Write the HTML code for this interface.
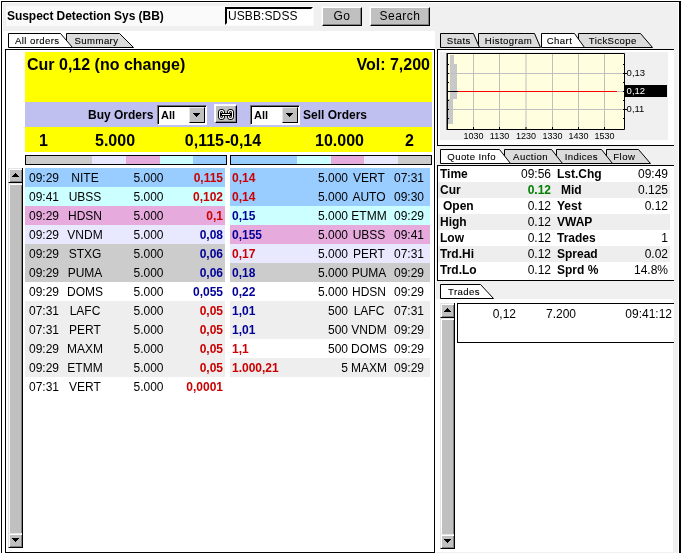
<!DOCTYPE html><html><head><meta charset="utf-8"><title>Suspect Detection Sys (BB)</title><style>
html,body{margin:0;padding:0;}
body{width:682px;height:553px;overflow:hidden;background:#fff;font-family:"Liberation Sans",Arial,sans-serif;font-size:12px;color:#000;position:relative;}
div,span{position:absolute;box-sizing:border-box;white-space:nowrap;}
.b{font-weight:bold;}
.row{height:19px;line-height:19px;}
.row span{top:0;height:19px;line-height:20px;}
.tab{height:15px;font-size:10px;line-height:13px;letter-spacing:0.5px;}
.btn{background:#c0c0c0;border:1px solid;border-color:#fff #000 #000 #fff;box-shadow:inset -1px -1px 0 #808080, -1px -1px 0 #f6f6f6;text-align:center;}
.sel{background:#fff;border:1px solid;border-color:#707070 #fff #fff #707070;box-shadow:inset 1px 1px 0 #000, inset -1px -1px 0 #fff;height:20px;width:50px;font-weight:bold;}
.sb{background:#c0c0c0;width:15px;border-right:1px solid #000;}
.q{height:16px;line-height:16px;left:438px;width:232px;}
.q span{top:0;height:16px;line-height:17px;}
</style></head><body><div style="left:0;top:0;width:682px;height:553px;will-change:transform;">
<div style="left:1px;top:1px;width:680px;height:552px;border:1px solid #000;border-right-width:2px;border-bottom:none;"></div>
<div style="left:3px;top:3px;width:675px;height:28px;background:#f0f0f0;"></div>
<div style="left:436px;top:31px;width:242px;height:522px;background:#f0f0f0;"></div>
<div style="left:435px;top:31px;width:1px;height:18px;background:#f0f0f0;"></div>
<div style="left:6px;top:6px;width:308px;height:20px;background:#fafafa;"></div>
<div class="b" style="left:7px;top:8px;font-size:12px;line-height:16px;letter-spacing:-0.05px;">Suspect Detection Sys (BB)</div>
<div style="left:225px;top:7px;width:88px;height:18px;background:#fff;border:2px solid;border-color:#000 #fff #fff #000;"><span style="left:1px;top:0;line-height:15px;font-size:12px;letter-spacing:0.1px;">USBB:SDSS</span></div>
<div class="btn" style="left:322px;top:7px;width:40px;height:19px;line-height:17px;font-size:12px;letter-spacing:0.5px;">Go</div>
<div class="btn" style="left:370px;top:7px;width:60px;height:19px;line-height:17px;font-size:12px;letter-spacing:0.5px;">Search</div>
<svg style="position:absolute;left:66px;top:33px;overflow:visible" width="69" height="16"><polygon points="0.5,0.5 53.5,0.5 67.5,14.5 0.5,14.5" fill="#dcdcdc" stroke="#000" stroke-width="1"/><text x="30.5" y="11" font-size="9.6" letter-spacing="0.4" stroke="#000" stroke-width="0.1" text-anchor="middle" font-family="Liberation Sans, Arial, sans-serif">Summary</text></svg>
<svg style="position:absolute;left:8px;top:33px;overflow:visible" width="66" height="16"><polygon points="0.5,0.5 52.5,0.5 64.5,14.5 0.5,14.5" fill="#fff" stroke="#000" stroke-width="1"/><text x="29.299999999999997" y="11" font-size="9.6" letter-spacing="0.4" stroke="#000" stroke-width="0.1" text-anchor="middle" font-family="Liberation Sans, Arial, sans-serif">All orders</text></svg>
<div style="left:5px;top:49px;width:430px;height:504px;border:1px solid #000;background:#fff;"></div>
<div style="left:25px;top:52px;width:407px;height:50px;background:#ffff00;"></div>
<div class="b" style="left:27px;top:55px;font-size:16px;line-height:20px;">Cur 0,12 (no change)</div>
<div class="b" style="right:252px;top:55px;font-size:16px;line-height:20px;">Vol: 7,200</div>
<div style="left:25px;top:102px;width:407px;height:25px;background:#c0c0f0;"></div>
<div class="b" style="left:88px;top:106px;font-size:12px;line-height:18px;">Buy Orders</div>
<div class="sel" style="left:157px;top:105px;"><span style="left:3px;top:1px;line-height:16px;font-size:11px;">All</span><div style="right:1px;top:1px;width:16px;height:16px;background:#c0c0c0;border:1px solid;border-color:#e8e8e8 #000 #000 #e8e8e8;"><svg style="position:absolute;left:3px;top:5px" width="7" height="4"><path d="M0 0h7v1h-1v1h-1v1h-1v1h-1v-1h-1v-1h-1v-1h-1z" fill="#000" shape-rendering="crispEdges"/></svg></div></div>
<div class="btn" style="left:215px;top:105px;width:22px;height:18px;"><svg style="position:absolute;left:2px;top:3px" width="16" height="11" viewBox="0 0 16 11"><rect x="0.5" y="0.5" width="6" height="10" rx="2.5" fill="none" stroke="#000" stroke-width="1"/><rect x="1.5" y="1.5" width="4" height="8" rx="1.8" fill="none" stroke="#fff" stroke-width="1"/><rect x="2.5" y="2.5" width="2" height="6" rx="1" fill="none" stroke="#000" stroke-width="1"/><rect x="9.5" y="0.5" width="6" height="10" rx="2.5" fill="none" stroke="#000" stroke-width="1"/><rect x="10.5" y="1.5" width="4" height="8" rx="1.8" fill="none" stroke="#fff" stroke-width="1"/><rect x="11.5" y="2.5" width="2" height="6" rx="1" fill="none" stroke="#000" stroke-width="1"/><rect x="3.5" y="4.5" width="9" height="2" fill="#fff" stroke="#000" stroke-width="1"/><rect x="4" y="5" width="8" height="1" fill="#fff"/></svg></div>
<div class="sel" style="left:250px;top:105px;"><span style="left:3px;top:1px;line-height:16px;font-size:11px;">All</span><div style="right:1px;top:1px;width:16px;height:16px;background:#c0c0c0;border:1px solid;border-color:#e8e8e8 #000 #000 #e8e8e8;"><svg style="position:absolute;left:3px;top:5px" width="7" height="4"><path d="M0 0h7v1h-1v1h-1v1h-1v1h-1v-1h-1v-1h-1v-1h-1z" fill="#000" shape-rendering="crispEdges"/></svg></div></div>
<div class="b" style="left:303px;top:106px;font-size:12px;line-height:18px;">Sell Orders</div>
<div class="b" style="left:25px;top:127px;width:407px;height:25px;background:#ffff00;font-size:16px;line-height:27px;"><span style="left:14px;">1</span><span style="left:70px;">5.000</span><span style="right:208px;">0,115</span><span style="left:200px;">-</span><span style="left:205px;">0,14</span><span style="left:290px;">10.000</span><span style="left:380px;">2</span></div>
<div style="left:25px;top:155px;width:202px;height:10px;border:1px solid #000;"><div style="left:0px;top:0;width:66px;height:8px;background:#cccccc;"></div><div style="left:66px;top:0;width:34px;height:8px;background:#e8e8ff;"></div><div style="left:100px;top:0;width:34px;height:8px;background:#e6aadc;"></div><div style="left:134px;top:0;width:33px;height:8px;background:#ccffff;"></div><div style="left:167px;top:0;width:33px;height:8px;background:#99ccff;"></div></div>
<div style="left:230px;top:155px;width:202px;height:10px;border:1px solid #000;"><div style="left:0px;top:0;width:66px;height:8px;background:#99ccff;"></div><div style="left:66px;top:0;width:34px;height:8px;background:#ccffff;"></div><div style="left:100px;top:0;width:33px;height:8px;background:#e6aadc;"></div><div style="left:133px;top:0;width:34px;height:8px;background:#e8e8ff;"></div><div style="left:167px;top:0;width:33px;height:8px;background:#cccccc;"></div></div>
<div class="sb" style="left:8px;top:168px;height:380px;"><div style="left:0;top:0;width:14px;height:15px;background:#c0c0c0;border-left:1px solid #e4e4e4;border-top:1px solid #e4e4e4;box-shadow:inset 1px 1px 0 #fff, inset -1px -1px 0 #808080;border-bottom:1px solid #000;"><svg style="position:absolute;left:3px;top:4px" width="7" height="4"><path d="M3 0h1v1h1v1h1v1h1v1h-7v-1h1v-1h1v-1h1z" fill="#000" shape-rendering="crispEdges"/></svg></div><div style="left:0;top:15px;width:14px;height:350px;background:#c0c0c0;border-left:1px solid #e4e4e4;border-top:1px solid #e4e4e4;box-shadow:inset 1px 1px 0 #fff, inset -1px 0 0 #808080;"></div><div style="left:0;top:365px;width:14px;height:15px;background:#c0c0c0;border-left:1px solid #e4e4e4;border-top:1px solid #e4e4e4;box-shadow:inset 1px 1px 0 #fff, inset -1px -1px 0 #808080;border-bottom:1px solid #000;"><svg style="position:absolute;left:3px;top:4px" width="7" height="4"><path d="M0 0h7v1h-1v1h-1v1h-1v1h-1v-1h-1v-1h-1v-1h-1z" fill="#000" shape-rendering="crispEdges"/></svg></div></div>
<div class="row" style="left:25px;top:168px;width:200px;background:#99ccff;"><span style="left:4px;">09:29</span><span style="left:35px;width:50px;text-align:center;">NITE</span><span style="right:61.5px;">5.000</span><span class="b" style="right:2px;color:#cc0000;">0,115</span></div>
<div class="row" style="left:25px;top:187px;width:200px;background:#ccffff;"><span style="left:4px;">09:41</span><span style="left:35px;width:50px;text-align:center;">UBSS</span><span style="right:61.5px;">5.000</span><span class="b" style="right:2px;color:#cc0000;">0,102</span></div>
<div class="row" style="left:25px;top:206px;width:200px;background:#e6aadc;"><span style="left:4px;">09:29</span><span style="left:35px;width:50px;text-align:center;">HDSN</span><span style="right:61.5px;">5.000</span><span class="b" style="right:2px;color:#cc0000;">0,1</span></div>
<div class="row" style="left:25px;top:225px;width:200px;background:#e8e8ff;"><span style="left:4px;">09:29</span><span style="left:35px;width:50px;text-align:center;">VNDM</span><span style="right:61.5px;">5.000</span><span class="b" style="right:2px;color:#000099;">0,08</span></div>
<div class="row" style="left:25px;top:244px;width:200px;background:#cccccc;"><span style="left:4px;">09:29</span><span style="left:35px;width:50px;text-align:center;">STXG</span><span style="right:61.5px;">5.000</span><span class="b" style="right:2px;color:#000099;">0,06</span></div>
<div class="row" style="left:25px;top:263px;width:200px;background:#cccccc;"><span style="left:4px;">09:29</span><span style="left:35px;width:50px;text-align:center;">PUMA</span><span style="right:61.5px;">5.000</span><span class="b" style="right:2px;color:#000099;">0,06</span></div>
<div class="row" style="left:25px;top:282px;width:200px;background:#ffffff;"><span style="left:4px;">09:29</span><span style="left:35px;width:50px;text-align:center;">DOMS</span><span style="right:61.5px;">5.000</span><span class="b" style="right:2px;color:#000099;">0,055</span></div>
<div class="row" style="left:25px;top:301px;width:200px;background:#eeeeee;"><span style="left:4px;">07:31</span><span style="left:35px;width:50px;text-align:center;">LAFC</span><span style="right:61.5px;">5.000</span><span class="b" style="right:2px;color:#cc0000;">0,05</span></div>
<div class="row" style="left:25px;top:320px;width:200px;background:#eeeeee;"><span style="left:4px;">07:31</span><span style="left:35px;width:50px;text-align:center;">PERT</span><span style="right:61.5px;">5.000</span><span class="b" style="right:2px;color:#cc0000;">0,05</span></div>
<div class="row" style="left:25px;top:339px;width:200px;background:#eeeeee;"><span style="left:4px;">09:29</span><span style="left:35px;width:50px;text-align:center;">MAXM</span><span style="right:61.5px;">5.000</span><span class="b" style="right:2px;color:#cc0000;">0,05</span></div>
<div class="row" style="left:25px;top:358px;width:200px;background:#eeeeee;"><span style="left:4px;">09:29</span><span style="left:35px;width:50px;text-align:center;">ETMM</span><span style="right:61.5px;">5.000</span><span class="b" style="right:2px;color:#cc0000;">0,05</span></div>
<div class="row" style="left:25px;top:377px;width:200px;background:#ffffff;"><span style="left:4px;">07:31</span><span style="left:35px;width:50px;text-align:center;">VERT</span><span style="right:61.5px;">5.000</span><span class="b" style="right:2px;color:#cc0000;">0,0001</span></div>
<div class="row" style="left:230px;top:168px;width:200px;background:#99ccff;"><span class="b" style="left:2px;color:#cc0000;">0,14</span><span style="right:82px;">5.000</span><span style="left:114px;width:50px;text-align:center;">VERT</span><span style="left:164px;">07:31</span></div>
<div class="row" style="left:230px;top:187px;width:200px;background:#99ccff;"><span class="b" style="left:2px;color:#cc0000;">0,14</span><span style="right:82px;">5.000</span><span style="left:114px;width:50px;text-align:center;">AUTO</span><span style="left:164px;">09:30</span></div>
<div class="row" style="left:230px;top:206px;width:200px;background:#ccffff;"><span class="b" style="left:2px;color:#000099;">0,15</span><span style="right:82px;">5.000</span><span style="left:114px;width:50px;text-align:center;">ETMM</span><span style="left:164px;">09:29</span></div>
<div class="row" style="left:230px;top:225px;width:200px;background:#e6aadc;"><span class="b" style="left:2px;color:#000099;">0,155</span><span style="right:82px;">5.000</span><span style="left:114px;width:50px;text-align:center;">UBSS</span><span style="left:164px;">09:41</span></div>
<div class="row" style="left:230px;top:244px;width:200px;background:#e8e8ff;"><span class="b" style="left:2px;color:#cc0000;">0,17</span><span style="right:82px;">5.000</span><span style="left:114px;width:50px;text-align:center;">PERT</span><span style="left:164px;">07:31</span></div>
<div class="row" style="left:230px;top:263px;width:200px;background:#cccccc;"><span class="b" style="left:2px;color:#000099;">0,18</span><span style="right:82px;">5.000</span><span style="left:114px;width:50px;text-align:center;">PUMA</span><span style="left:164px;">09:29</span></div>
<div class="row" style="left:230px;top:282px;width:200px;background:#ffffff;"><span class="b" style="left:2px;color:#000099;">0,22</span><span style="right:82px;">5.000</span><span style="left:114px;width:50px;text-align:center;">HDSN</span><span style="left:164px;">09:29</span></div>
<div class="row" style="left:230px;top:301px;width:200px;background:#eeeeee;"><span class="b" style="left:2px;color:#000099;">1,01</span><span style="right:82px;">500</span><span style="left:114px;width:50px;text-align:center;">LAFC</span><span style="left:164px;">07:31</span></div>
<div class="row" style="left:230px;top:320px;width:200px;background:#eeeeee;"><span class="b" style="left:2px;color:#000099;">1,01</span><span style="right:82px;">500</span><span style="left:114px;width:50px;text-align:center;">VNDM</span><span style="left:164px;">09:29</span></div>
<div class="row" style="left:230px;top:339px;width:200px;background:#ffffff;"><span class="b" style="left:2px;color:#cc0000;">1,1</span><span style="right:82px;">500</span><span style="left:114px;width:50px;text-align:center;">DOMS</span><span style="left:164px;">09:29</span></div>
<div class="row" style="left:230px;top:358px;width:200px;background:#eeeeee;"><span class="b" style="left:2px;color:#cc0000;">1.000,21</span><span style="right:82px;">5</span><span style="left:114px;width:50px;text-align:center;">MAXM</span><span style="left:164px;">09:29</span></div>
<svg style="position:absolute;left:578px;top:33px;overflow:visible" width="76" height="16"><polygon points="0.5,0.5 62.5,0.5 74.5,14.5 0.5,14.5" fill="#dcdcdc" stroke="#000" stroke-width="1"/><text x="34.799999999999955" y="11" font-size="9.6" letter-spacing="0.4" stroke="#000" stroke-width="0.1" text-anchor="middle" font-family="Liberation Sans, Arial, sans-serif">TickScope</text></svg>
<svg style="position:absolute;left:478px;top:33px;overflow:visible" width="64" height="16"><polygon points="0.5,0.5 56.5,0.5 62.5,14.5 0.5,14.5" fill="#dcdcdc" stroke="#000" stroke-width="1"/><text x="30.5" y="11" font-size="9.6" letter-spacing="0.4" stroke="#000" stroke-width="0.1" text-anchor="middle" font-family="Liberation Sans, Arial, sans-serif">Histogram</text></svg>
<svg style="position:absolute;left:440px;top:33px;overflow:visible" width="41" height="16"><polygon points="0.5,0.5 33.5,0.5 39.5,14.5 0.5,14.5" fill="#dcdcdc" stroke="#000" stroke-width="1"/><text x="18.80000000000001" y="11" font-size="9.6" letter-spacing="0.4" stroke="#000" stroke-width="0.1" text-anchor="middle" font-family="Liberation Sans, Arial, sans-serif">Stats</text></svg>
<svg style="position:absolute;left:541px;top:33px;overflow:visible" width="45" height="16"><polygon points="0.5,0.5 33.5,0.5 43.5,14.5 0.5,14.5" fill="#fff" stroke="#000" stroke-width="1"/><text x="18.5" y="11" font-size="9.6" letter-spacing="0.4" stroke="#000" stroke-width="0.1" text-anchor="middle" font-family="Liberation Sans, Arial, sans-serif">Chart</text></svg>
<div style="left:437px;top:49px;width:237px;height:97px;background:#fff;border:1px solid #000;border-right:none;"></div>
<div style="left:440px;top:52px;width:228px;height:88px;background:#f0f0f0;"></div>
<svg style="position:absolute;left:437px;top:49px" width="237" height="97" font-family="Liberation Sans, Arial, sans-serif" font-size="9"><rect x="10" y="4" width="178" height="77" fill="#ffffe0"/><rect x="13" y="6" width="4" height="10" fill="#c8c8c8"/><rect x="13" y="15" width="7" height="35" fill="#c8c8c8"/><rect x="11" y="50" width="5" height="25" fill="#c8c8c8"/><line x1="36.5" y1="5" x2="36.5" y2="80" stroke="#c0c0c0" stroke-width="1"/><line x1="62.5" y1="5" x2="62.5" y2="80" stroke="#c0c0c0" stroke-width="1"/><line x1="89.0" y1="5" x2="89.0" y2="80" stroke="#c0c0c0" stroke-width="1"/><line x1="115.5" y1="5" x2="115.5" y2="80" stroke="#c0c0c0" stroke-width="1"/><line x1="141.5" y1="5" x2="141.5" y2="80" stroke="#c0c0c0" stroke-width="1"/><line x1="167.5" y1="5" x2="167.5" y2="80" stroke="#c0c0c0" stroke-width="1"/><line x1="11" y1="24.5" x2="187" y2="24.5" stroke="#c0c0c0" stroke-width="1"/><line x1="11" y1="60.5" x2="187" y2="60.5" stroke="#c0c0c0" stroke-width="1"/><line x1="10" y1="42.5" x2="21" y2="42.5" stroke="#000"/><line x1="21" y1="42.5" x2="180" y2="42.5" stroke="#ff0000"/><line x1="180" y1="42.5" x2="187" y2="42.5" stroke="#c0c0c0"/><path d="M10.5 4.5 H187.5 V80.5 H10.5 Z" fill="none" stroke="#000" stroke-width="1"/><rect x="9.5" y="4" width="1.4" height="77" fill="#000"/><line x1="10" y1="15.5" x2="12" y2="15.5" stroke="#000"/><line x1="186" y1="15.5" x2="188" y2="15.5" stroke="#000"/><line x1="10" y1="24.5" x2="12" y2="24.5" stroke="#000"/><line x1="186" y1="24.5" x2="190" y2="24.5" stroke="#000"/><line x1="10" y1="33.5" x2="12" y2="33.5" stroke="#000"/><line x1="186" y1="33.5" x2="188" y2="33.5" stroke="#000"/><line x1="10" y1="42.5" x2="12" y2="42.5" stroke="#000"/><line x1="186" y1="42.5" x2="190" y2="42.5" stroke="#000"/><line x1="10" y1="51.5" x2="12" y2="51.5" stroke="#000"/><line x1="186" y1="51.5" x2="188" y2="51.5" stroke="#000"/><line x1="10" y1="60.5" x2="12" y2="60.5" stroke="#000"/><line x1="186" y1="60.5" x2="190" y2="60.5" stroke="#000"/><line x1="10" y1="69.5" x2="12" y2="69.5" stroke="#000"/><line x1="186" y1="69.5" x2="188" y2="69.5" stroke="#000"/><line x1="36.5" y1="78" x2="36.5" y2="81" stroke="#000" stroke-width="1"/><line x1="62.5" y1="78" x2="62.5" y2="81" stroke="#000" stroke-width="1"/><line x1="89.0" y1="78" x2="89.0" y2="81" stroke="#000" stroke-width="1"/><line x1="115.5" y1="78" x2="115.5" y2="81" stroke="#000" stroke-width="1"/><line x1="141.5" y1="78" x2="141.5" y2="81" stroke="#000" stroke-width="1"/><line x1="167.5" y1="78" x2="167.5" y2="81" stroke="#000" stroke-width="1"/><text x="36.5" y="89.6" text-anchor="middle">1030</text><text x="62.5" y="89.6" text-anchor="middle">1130</text><text x="89.0" y="89.6" text-anchor="middle">1230</text><text x="115.5" y="89.6" text-anchor="middle">1330</text><text x="141.5" y="89.6" text-anchor="middle">1430</text><text x="167.5" y="89.6" text-anchor="middle">1530</text><rect x="188" y="36" width="42" height="12" fill="#000"/><text x="189.60000000000002" y="27.200000000000003" font-size="9.5">0,13</text><text x="189.60000000000002" y="45.2" fill="#fff" font-size="9.5">0,12</text><text x="189.60000000000002" y="63.2" font-size="9.5">0,11</text></svg>
<svg style="position:absolute;left:606px;top:149px;overflow:visible" width="46" height="16"><polygon points="0.5,0.5 32.5,0.5 44.5,14.5 0.5,14.5" fill="#dcdcdc" stroke="#000" stroke-width="1"/><text x="18.299999999999955" y="11" font-size="9.6" letter-spacing="0.4" stroke="#000" stroke-width="0.1" text-anchor="middle" font-family="Liberation Sans, Arial, sans-serif">Flow</text></svg>
<svg style="position:absolute;left:556px;top:149px;overflow:visible" width="58" height="16"><polygon points="0.5,0.5 45.5,0.5 56.5,14.5 0.5,14.5" fill="#dcdcdc" stroke="#000" stroke-width="1"/><text x="25.399999999999977" y="11" font-size="9.6" letter-spacing="0.4" stroke="#000" stroke-width="0.1" text-anchor="middle" font-family="Liberation Sans, Arial, sans-serif">Indices</text></svg>
<svg style="position:absolute;left:504px;top:149px;overflow:visible" width="60" height="16"><polygon points="0.5,0.5 47.5,0.5 58.5,14.5 0.5,14.5" fill="#dcdcdc" stroke="#000" stroke-width="1"/><text x="26.5" y="11" font-size="9.6" letter-spacing="0.4" stroke="#000" stroke-width="0.1" text-anchor="middle" font-family="Liberation Sans, Arial, sans-serif">Auction</text></svg>
<svg style="position:absolute;left:440px;top:149px;overflow:visible" width="72" height="16"><polygon points="0.5,0.5 59.5,0.5 70.5,14.5 0.5,14.5" fill="#fff" stroke="#000" stroke-width="1"/><text x="31.69999999999999" y="11" font-size="9.6" letter-spacing="0.4" stroke="#000" stroke-width="0.1" text-anchor="middle" font-family="Liberation Sans, Arial, sans-serif">Quote Info</text></svg>
<div style="left:437px;top:165px;width:237px;height:116px;background:#fff;border:1px solid #000;border-right:none;"></div>
<div class="q" style="top:166px;background:#fff;"><span class="b" style="left:2px;">Time</span><span style="right:119px;">09:56</span><span class="b" style="left:119px;">Lst.Chg</span><span style="right:2px;">09:49</span></div>
<div class="q" style="top:182px;background:#eeeeee;"><span class="b" style="left:2px;">Cur</span><span style="right:119px;color:#008000;font-weight:bold;">0.12</span><span class="b" style="left:123px;">Mid</span><span style="right:2px;">0.125</span></div>
<div class="q" style="top:198px;background:#fff;"><span class="b" style="left:5px;">Open</span><span style="right:119px;">0.12</span><span class="b" style="left:119px;">Yest</span><span style="right:2px;">0.12</span></div>
<div class="q" style="top:214px;background:#eeeeee;"><span class="b" style="left:2px;">High</span><span style="right:119px;">0.12</span><span class="b" style="left:119px;">VWAP</span><span style="right:2px;"></span></div>
<div class="q" style="top:230px;background:#fff;"><span class="b" style="left:2px;">Low</span><span style="right:119px;">0.12</span><span class="b" style="left:119px;">Trades</span><span style="right:2px;">1</span></div>
<div class="q" style="top:246px;background:#eeeeee;"><span class="b" style="left:2px;">Trd.Hi</span><span style="right:119px;">0.12</span><span class="b" style="left:119px;">Spread</span><span style="right:2px;">0.02</span></div>
<div class="q" style="top:262px;background:#fff;"><span class="b" style="left:2px;">Trd.Lo</span><span style="right:119px;">0.12</span><span class="b" style="left:119px;">Sprd %</span><span style="right:2px;">14.8%</span></div>
<svg style="position:absolute;left:440px;top:284px;overflow:visible" width="55" height="16"><polygon points="0.5,0.5 40.5,0.5 53.5,14.5 0.5,14.5" fill="#fff" stroke="#000" stroke-width="1"/><text x="24" y="11" font-size="9.6" letter-spacing="0.4" stroke="#000" stroke-width="0.1" text-anchor="middle" font-family="Liberation Sans, Arial, sans-serif">Trades</text></svg>
<div style="left:436px;top:299px;width:237px;height:253px;background:#fff;"></div>
<div class="sb" style="left:440px;top:303px;height:246px;"><div style="left:0;top:0;width:14px;height:15px;background:#c0c0c0;border-left:1px solid #e4e4e4;border-top:1px solid #e4e4e4;box-shadow:inset 1px 1px 0 #fff, inset -1px -1px 0 #808080;border-bottom:1px solid #000;"><svg style="position:absolute;left:3px;top:4px" width="7" height="4"><path d="M3 0h1v1h1v1h1v1h1v1h-7v-1h1v-1h1v-1h1z" fill="#000" shape-rendering="crispEdges"/></svg></div><div style="left:0;top:15px;width:14px;height:216px;background:#c0c0c0;border-left:1px solid #e4e4e4;border-top:1px solid #e4e4e4;box-shadow:inset 1px 1px 0 #fff, inset -1px 0 0 #808080;"></div><div style="left:0;top:231px;width:14px;height:15px;background:#c0c0c0;border-left:1px solid #e4e4e4;border-top:1px solid #e4e4e4;box-shadow:inset 1px 1px 0 #fff, inset -1px -1px 0 #808080;border-bottom:1px solid #000;"><svg style="position:absolute;left:3px;top:4px" width="7" height="4"><path d="M0 0h7v1h-1v1h-1v1h-1v1h-1v-1h-1v-1h-1v-1h-1z" fill="#000" shape-rendering="crispEdges"/></svg></div></div>
<div style="left:457px;top:303px;width:217px;height:40px;border:1px solid #000;border-right:none;background:#fff;"><span style="right:158px;top:2px;line-height:16px;">0,12</span><span style="right:98px;top:2px;line-height:16px;">7.200</span><span style="right:2px;top:2px;line-height:16px;">09:41:12</span></div>
</div></body></html>
